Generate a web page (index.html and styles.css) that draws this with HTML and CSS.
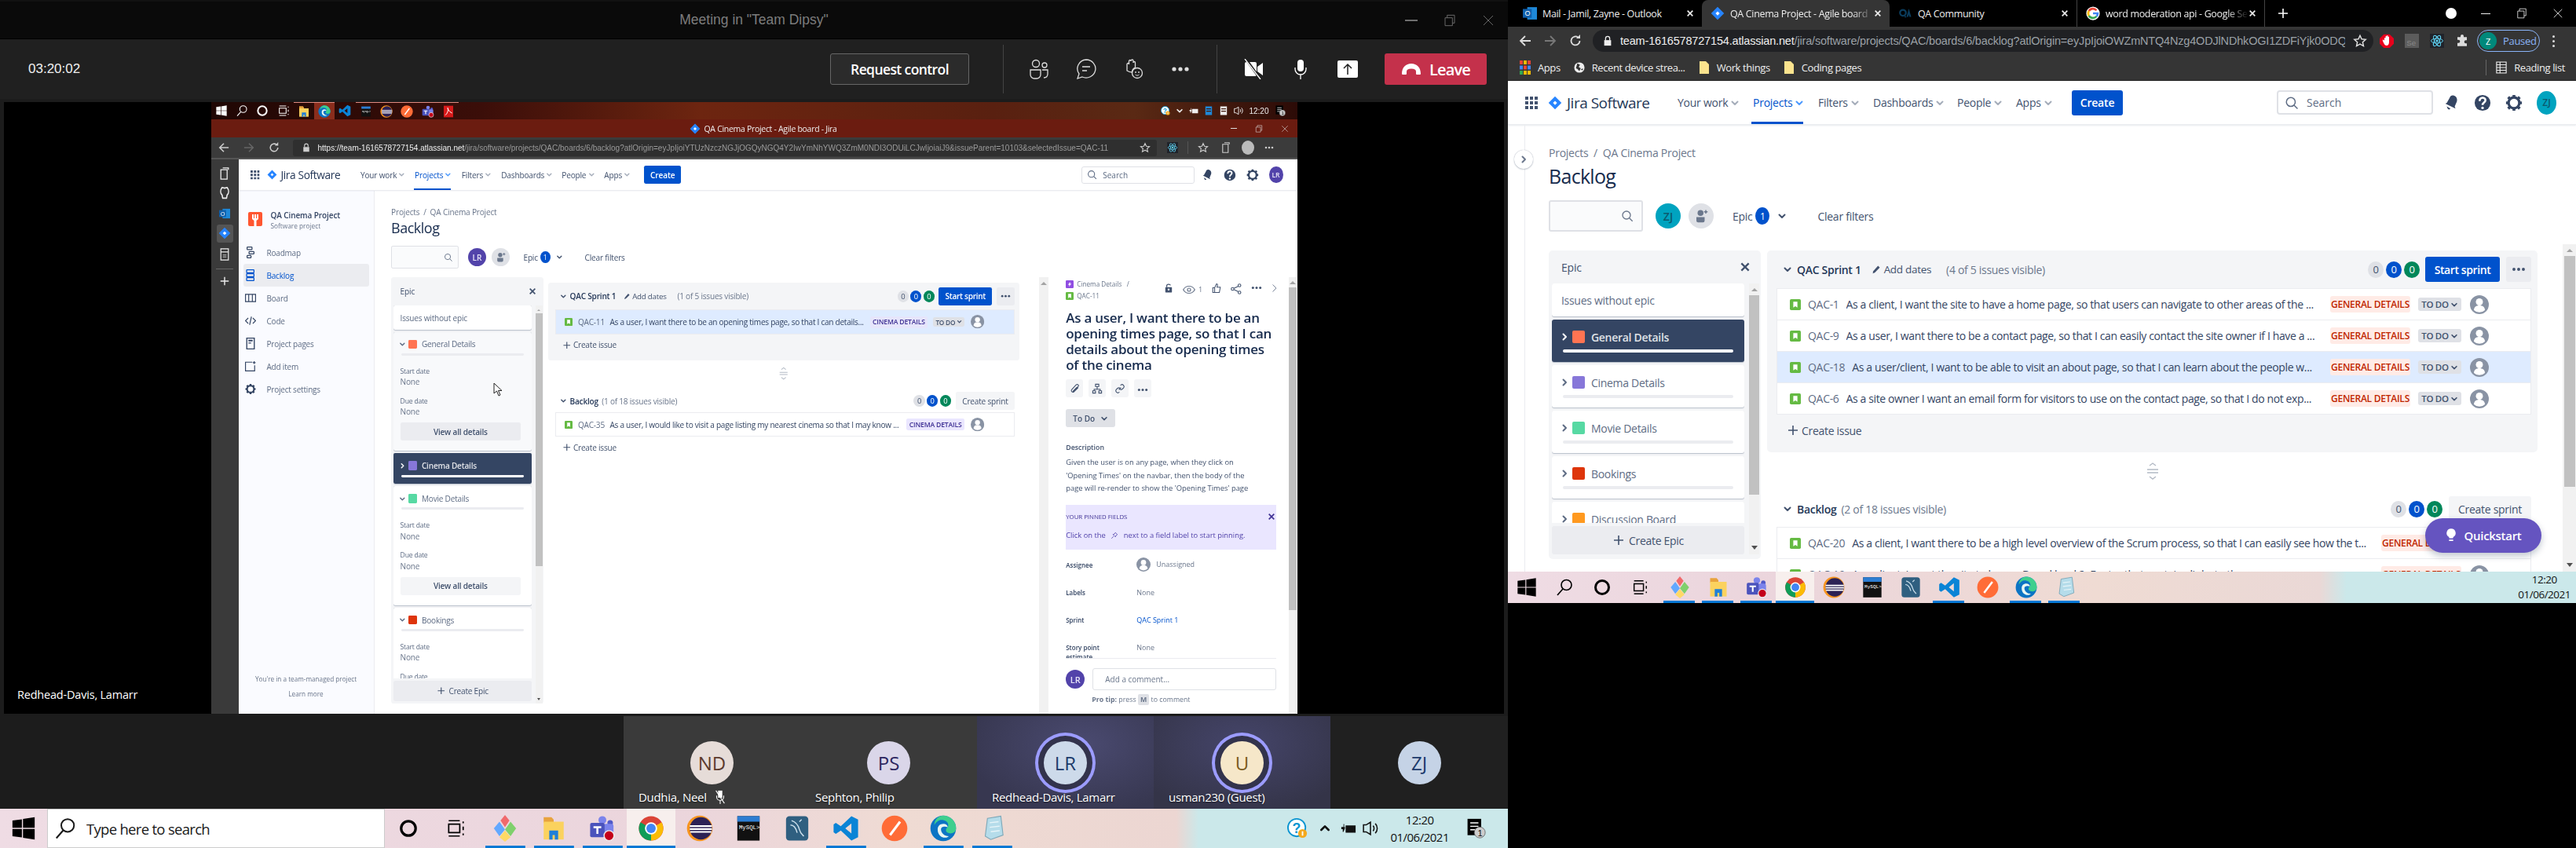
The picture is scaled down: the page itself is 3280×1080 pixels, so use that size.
FILE: index.html
```html
<!DOCTYPE html>
<html lang="en">
<head>
<meta charset="utf-8">
<title>Meeting in Team Dipsy</title>
<link rel="stylesheet" href="styles.css">
</head>
<body>
<svg class="defs" xmlns="http://www.w3.org/2000/svg">
<symbol id="win" viewBox="0 0 24 24"><path fill="currentColor" d="M2 5 10.5 3.8V11.5H2zM11.5 3.6 22 2V11.5H11.5zM2 12.5H10.5V20.2L2 19zM11.5 12.5H22V22L11.5 20.4z"/></symbol>
<symbol id="mag" viewBox="0 0 24 24"><circle cx="14.5" cy="9" r="6.5" fill="none" stroke="currentColor" stroke-width="1.6"/><path d="M10 14 3 22" fill="none" stroke="currentColor" stroke-width="1.6"/></symbol>
<symbol id="ring" viewBox="0 0 24 24"><circle cx="12" cy="12" r="8.5" fill="none" stroke="currentColor" stroke-width="3"/></symbol>
<symbol id="taskv" viewBox="0 0 24 24"><path fill="none" stroke="currentColor" stroke-width="1.6" d="M4 3H17M4 21H17M4 7h13v10H4zM21 4v2M21 10v4M21 18v2"/></symbol>
<symbol id="tree" viewBox="0 0 24 24"><polygon fill="#62a8ff" points="7,6 12,13 7,19 2,12"/><polygon fill="#7fd06c" points="17,6 22,12 17,19 12,13"/><polygon fill="#f0696c" points="12,0 16,5 12,11 8,5"/><polygon fill="#ffd966" points="12,14 17,20 12,24 7,20"/></symbol>
<symbol id="folder" viewBox="0 0 24 24"><path fill="#e8a33d" d="M3 2h7l2 2v3H3z"/><path fill="#fbd25e" d="M3 6h18v16H3z"/><path fill="#1f7fd8" d="M8 22v-8h8v8h-3v-4h-2v4z"/></symbol>
<symbol id="teams" viewBox="0 0 24 24"><circle cx="12" cy="4.5" r="3.5" fill="#7b83eb"/><circle cx="19" cy="7" r="2.5" fill="#5059c9"/><rect x="13" y="8" width="9" height="11" rx="2" fill="#7b83eb"/><rect x="1" y="7" width="13" height="13" rx="1.5" fill="#4b53bc"/><path fill="#fff" d="M4 10h7v1.8H8.4V17H6.6V11.8H4z"/><circle cx="18" cy="18.5" r="4.5" fill="#c4001a" stroke="#eee" stroke-width="1"/></symbol>
<symbol id="chrome" viewBox="0 0 24 24"><circle cx="12" cy="12" r="11" fill="#db4437"/><path fill="#fbbc05" d="M12 12 21.5 6.5A11 11 0 0 1 12 23z"/><path fill="#0f9d58" d="M12 12V23A11 11 0 0 1 2.5 6.5z"/><circle cx="12" cy="12" r="5.5" fill="#fff"/><circle cx="12" cy="12" r="4.2" fill="#4285f4"/></symbol>
<symbol id="eclipse" viewBox="0 0 24 24"><circle cx="12" cy="12" r="11.5" fill="#f7941e"/><circle cx="13" cy="12" r="10" fill="#2c2255"/><path stroke="#fff" stroke-width="1.5" d="M3 10h20M3 12.6h20M3.500 15.200h19"/></symbol>
<symbol id="mysh" viewBox="0 0 24 24"><rect x="2" y="1" width="20" height="22" fill="#111"/><rect x="2" y="1" width="20" height="5" fill="#2d7dd2"/><text x="3.500" y="13" font-size="5.200" fill="#fff" font-family="Liberation Mono">MySQL&gt;</text></symbol>
<symbol id="wb" viewBox="0 0 24 24"><rect x="2" y="1" width="20" height="22" rx="3" fill="#2f5f80"/><path fill="none" stroke="#cfe2ee" stroke-width="1" d="M7 5c3 1 6 4 7 8s3 5 4 6M6 9c3 0 5 3 6 7M14 6l2-2"/></symbol>
<symbol id="vscode" viewBox="0 0 24 24"><path fill="#0a84d6" fill-rule="evenodd" d="M17 1 7.500 10 3 7 1 8.500v7L3 17l4.500-3L17 23l6-3V4zM17 7.500v9L11.500 12z"/></symbol>
<symbol id="postman" viewBox="0 0 24 24"><circle cx="12" cy="12" r="11.500" fill="#ff6c37"/><path d="M8 18 17 6" stroke="#fff" stroke-width="2.200"/></symbol>
<symbol id="edge" viewBox="0 0 24 24"><circle cx="12" cy="12" r="11.500" fill="#0c74c4"/><path fill="#3ecf8e" d="M12 .5A11.500 11.500 0 0 1 23.500 12c0 3-2.500 4.500-5 4.500-2 0-4-1-4-2.500 0-3 2-2 2-5C16.500 6 13 4 9 4.500 7 5 5 7 4 9 4 4 8 .5 12 .5z"/><path fill="#e9f6f2" d="M7 13c0-3 2-5 5-5 2 0 4 1 4 3-2-1-6-1-6 2 0 3 3 6 7 6-3 3-10 1-10-6z"/></symbol>
<symbol id="note" viewBox="0 0 24 24"><path fill="#b5dcea" stroke="#7ea8b8" stroke-width=".8" d="M8 3 20 1l2 17-11 4-5-3z"/><path fill="none" stroke="#e7f4f8" stroke-width="1" d="M10 7l8-1M10 11l9-1M11 15l8-1"/></symbol>
<symbol id="story" viewBox="0 0 24 24"><rect width="24" height="24" rx="3" fill="#65ba43"/><path fill="#fff" d="M7.500 5.500h9v13L12 15.300 7.500 18.500z"/></symbol>
<symbol id="epicb" viewBox="0 0 24 24"><rect width="24" height="24" rx="3" fill="#904ee2"/><path fill="#fff" d="M13.500 4 7 13.500h4L10 20l7-10h-4z"/></symbol>
<symbol id="ua" viewBox="0 0 24 24"><circle cx="12" cy="12" r="12" fill="#8993a4"/><circle cx="12" cy="8.500" r="4.500" fill="#fff"/><path fill="#fff" d="M5 19c0-4 3-6 7-6s7 2 7 6a10 10 0 0 1-14 0z"/></symbol>
<symbol id="logo" viewBox="0 0 24 24"><path fill="#2684ff" d="M12 1 23 12 12 23 1 12z"/><path fill="#fff" d="M12 8.500 15.500 12 12 15.500 8.500 12z"/></symbol>
<symbol id="qalogo" viewBox="0 0 18 18"><rect width="18" height="18" rx="2" fill="#ff5630"/><path fill="#fff" d="M5 3h2v5h1V3h2v5h1V3h2v6l-2.500 2v7h-3v-7L5 9z"/></symbol>
<symbol id="grid" viewBox="0 0 16 16"><path fill="currentColor" d="M0 0h4v4H0zM6 0h4v4H6zM12 0h4v4h-4zM0 6h4v4H0zM6 6h4v4H6zM12 6h4v4h-4zM0 12h4v4H0zM6 12h4v4H6zM12 12h4v4h-4z"/></symbol>
<symbol id="chev" viewBox="0 0 12 12"><path fill="none" stroke="currentColor" stroke-width="2" stroke-linecap="round" stroke-linejoin="round" d="M2.500 4.500 6 8l3.500-3.500"/></symbol>
<symbol id="chevr" viewBox="0 0 12 12"><path fill="none" stroke="currentColor" stroke-width="2" stroke-linecap="round" stroke-linejoin="round" d="M4.500 2.500 8 6l-3.500 3.500"/></symbol>
<symbol id="srch" viewBox="0 0 24 24"><circle cx="10.500" cy="10.500" r="7.500" fill="none" stroke="currentColor" stroke-width="2"/><path d="M16 16l6 6" stroke="currentColor" stroke-width="2"/></symbol>
<symbol id="bell" viewBox="0 0 24 24"><path fill="currentColor" d="M16 2c3 1 5 4 4 8l-3 7 1 3-14-7 2-1 4-7c1-3 3-4 6-3zM6 17l5 3c-1 2-4 2-5-3z"/></symbol>
<symbol id="help" viewBox="0 0 24 24"><circle cx="12" cy="12" r="11" fill="currentColor"/><path fill="none" stroke="#fff" stroke-width="2.800" d="M8 9.500c0-6 8-6 8-1 0 3-4 3-4 6.500"/><circle cx="12" cy="19" r="1.800" fill="#fff"/></symbol>
<symbol id="gear" viewBox="0 0 24 24"><circle cx="12" cy="12" r="7.500" fill="none" stroke="currentColor" stroke-width="3.500"/><path stroke="currentColor" stroke-width="4" d="M12 1v4M12 19v4M1 12h4M19 12h4M4 4l3 3M17 17l3 3M20 4l-3 3M7 17l-3 3"/></symbol>
<symbol id="plus" viewBox="0 0 16 16"><path fill="none" stroke="currentColor" stroke-width="1.600" d="M8 2v12M2 8h12"/></symbol>
<symbol id="x" viewBox="0 0 12 12"><path fill="none" stroke="currentColor" stroke-width="2" d="M2 2l8 8M10 2l-8 8"/></symbol>
<symbol id="xthin" viewBox="0 0 24 24"><path fill="none" stroke="currentColor" stroke-width="1.400" d="M3 3l18 18M21 3 3 21"/></symbol>
<symbol id="pen" viewBox="0 0 16 16"><path fill="currentColor" d="M11 2l3 3-8.500 8.500L2 15l1-4z"/></symbol>
<symbol id="dots" viewBox="0 0 24 8"><circle cx="4" cy="4" r="2.600" fill="currentColor"/><circle cx="12" cy="4" r="2.600" fill="currentColor"/><circle cx="20" cy="4" r="2.600" fill="currentColor"/></symbol>
<symbol id="handle" viewBox="0 0 16 24"><path fill="none" stroke="#b3bac5" stroke-width="1.400" d="M4 5l4-3 4 3M1 10h14M1 14h14M4 19l4 3 4-3"/></symbol>
<symbol id="bulb" viewBox="0 0 16 20"><path fill="currentColor" d="M8 0a6.500 6.500 0 0 1 3.500 12c-.6.400-.8 1-.8 2H5.300c0-1-.2-1.600-.8-2A6.500 6.500 0 0 1 8 0zM5 16h6v2H5z"/></symbol>
<symbol id="back" viewBox="0 0 16 16"><path fill="none" stroke="currentColor" stroke-width="1.800" d="M15 8H2M8 2 2 8l6 6"/></symbol>
<symbol id="fwd" viewBox="0 0 16 16"><path fill="none" stroke="currentColor" stroke-width="1.800" d="M1 8h13M8 2l6 6-6 6"/></symbol>
<symbol id="reload" viewBox="0 0 16 16"><path fill="none" stroke="currentColor" stroke-width="1.800" d="M13.500 8A5.500 5.500 0 1 1 11.500 3.700"/><path fill="currentColor" d="M9 5h5V0z"/></symbol>
<symbol id="lock" viewBox="0 0 12 16"><path fill="currentColor" d="M1 7h10v8H1z"/><path fill="none" stroke="currentColor" stroke-width="1.500" d="M3 7V4.500a3 3 0 0 1 6 0V7"/></symbol>
<symbol id="star" viewBox="0 0 24 24"><path fill="none" stroke="currentColor" stroke-width="2" d="M12 3l2.800 6 6.700.7-5 4.500 1.400 6.600L12 17.400 6.100 20.800l1.400-6.600-5-4.500 6.700-.7z"/></symbol>
<symbol id="react" viewBox="0 0 24 24"><rect width="24" height="24" fill="#20232a"/><g fill="none" stroke="#61dafb" stroke-width="1.200"><ellipse cx="12" cy="12" rx="10" ry="4"/><ellipse cx="12" cy="12" rx="10" ry="4" transform="rotate(60 12 12)"/><ellipse cx="12" cy="12" rx="10" ry="4" transform="rotate(120 12 12)"/></g><circle cx="12" cy="12" r="2" fill="#61dafb"/></symbol>
<symbol id="puzzle" viewBox="0 0 24 24"><path fill="currentColor" d="M9 3a3 3 0 0 1 6 0v2h6v6h-2a3 3 0 0 0 0 6h2v5H3v-6h2a3 3 0 0 0 0-6H3V5h6z"/></symbol>
<symbol id="hand" viewBox="0 0 24 24"><path d="M7 1h10l7 7v9l-7 7H7l-7-7V8z" fill="#e8001c"/><path fill="#fff" d="M8 8c0-2 2-2 2 0V5c0-2 2-2 2 0v-1c0-2 2-2 2 0v2c0-2 2-2 2 0v8c0 4-2 6-4 6-3 0-4-2-6-6l-1-3c0-2 2-1 2.500 0L8 12z"/></symbol>
<symbol id="people" viewBox="0 0 26 26"><g fill="none" stroke="currentColor" stroke-width="1.300"><circle cx="9" cy="6" r="4.500"/><circle cx="20" cy="8" r="3"/><path d="M2 14h13v6a5 5 0 0 1-5 5H7a5 5 0 0 1-5-5zM17 14h7v5c0 3-2 5-5 5"/></g></symbol>
<symbol id="chat" viewBox="0 0 26 26"><path fill="none" stroke="currentColor" stroke-width="1.300" d="M13 1a12 11.500 0 1 1-5 22l-6 2 2-6A12 11.500 0 0 1 13 1z"/><path stroke="currentColor" stroke-width="1.300" d="M8 10h10M8 15h6"/></symbol>
<symbol id="raise" viewBox="0 0 26 26"><path fill="none" stroke="currentColor" stroke-width="1.300" d="M5 15V7c0-2 2.500-2 2.500 0V3c0-2 2.500-2 2.500 0v-.5c0-2 3-2 3 0V5c0-2 2.500-2 2.500 0v6c-3 1-4 3-4 6-3 0-5-1-6.500-2z"/><circle cx="18" cy="18" r="6.500" fill="none" stroke="currentColor" stroke-width="1.300"/><circle cx="16" cy="17" r=".9" fill="currentColor"/><circle cx="20" cy="17" r=".9" fill="currentColor"/><path fill="none" stroke="currentColor" d="M15.500 20c1.500 1.500 3.500 1.500 5 0"/></symbol>
<symbol id="camoff" viewBox="0 0 26 26"><path fill="#fff" d="M2 6a2 2 0 0 1 2-2h11a2 2 0 0 1 2 2v14a2 2 0 0 1-2 2H4a2 2 0 0 1-2-2zM18 10l7-5v16l-7-5z"/><path stroke="#202020" stroke-width="3" d="M4 1l18 25"/><path stroke="#fff" stroke-width="1.300" d="M2 0l20 26"/></symbol>
<symbol id="mic" viewBox="0 0 18 26"><rect x="5" y="1" width="8" height="15" rx="4" fill="#fff"/><path fill="none" stroke="#fff" stroke-width="1.300" d="M2 11v2a7 7 0 0 0 14 0v-2M9 20v6"/></symbol>
<symbol id="share" viewBox="0 0 26 22"><rect width="26" height="22" rx="2" fill="#fff"/><path fill="none" stroke="#202020" stroke-width="1.500" d="M13 18V5M8 10l5-5 5 5"/></symbol>
<symbol id="phone" viewBox="0 0 26 16"><path fill="#fff" d="M1 14C1 6 6 1 13 1s12 5 12 13a1 1 0 0 1-1 1h-4a1 1 0 0 1-1-1v-3c0-2-2-3.500-6-3.500S7 9 7 11v3a1 1 0 0 1-1 1H2a1 1 0 0 1-1-1z"/></symbol>
<symbol id="restore" viewBox="0 0 24 24"><path fill="none" stroke="currentColor" stroke-width="1.400" d="M3 7h14v15H3zM7 7V2h14v15h-4"/></symbol>
<symbol id="copy" viewBox="0 0 16 20"><path fill="none" stroke="currentColor" stroke-width="1.600" d="M2 4h10v15H2zM5 1h9v3"/></symbol>
<symbol id="github" viewBox="0 0 16 20"><path fill="none" stroke="currentColor" stroke-width="2" d="M4 1c-3 4-3 9 0 12l1 5h6l1-5c3-3 3-8 0-12l-4 1z"/></symbol>
<symbol id="outl" viewBox="0 0 16 16"><rect x="5" y="1" width="11" height="14" fill="#1e88d8"/><rect y="3" width="10" height="10" fill="#0f5fab"/><text x="2.300" y="11" font-size="8" fill="#fff" font-family="Liberation Sans">O</text></symbol>
<symbol id="disk" viewBox="0 0 16 20"><path fill="none" stroke="currentColor" stroke-width="1.500" d="M2 1h12v18H2zM2 6h12"/><path stroke="currentColor" d="M5 11h6M5 14h6"/></symbol>
<symbol id="road" viewBox="0 0 16 24"><g fill="none" stroke="currentColor" stroke-width="2"><rect x="1" y="1" width="10" height="5" rx="1"/><rect x="5" y="10" width="10" height="5" rx="1"/><rect x="1" y="18" width="8" height="5" rx="1"/></g></symbol>
<symbol id="blog" viewBox="0 0 18 24"><g fill="none" stroke="currentColor" stroke-width="2"><rect x="1" y="1" width="15" height="6" rx="1"/><rect x="1" y="9" width="15" height="6" rx="1"/><rect x="1" y="17" width="15" height="6" rx="1"/></g></symbol>
<symbol id="board" viewBox="0 0 24 18"><path fill="none" stroke="currentColor" stroke-width="2" d="M1 1h22v16H1zM8 1v16M16 1v16"/></symbol>
<symbol id="code" viewBox="0 0 24 20"><path fill="none" stroke="currentColor" stroke-width="2" d="M7 4 1 10l6 6M17 4l6 6-6 6M14 1l-4 18"/></symbol>
<symbol id="page" viewBox="0 0 16 22"><path fill="none" stroke="currentColor" stroke-width="2" d="M1 1h14v20H1z"/><path fill="currentColor" d="M4 4h8v3H4zM4 9h5v2H4z"/></symbol>
<symbol id="add" viewBox="0 0 24 22"><path fill="none" stroke="currentColor" stroke-width="2" d="M16 2H1v19h20V9"/><path stroke="currentColor" stroke-width="2" d="M20 0v6M17 3h6"/></symbol>
<symbol id="tray" viewBox="0 0 18 16"><path fill="none" stroke="currentColor" stroke-width="1.400" d="M1 4h3l5-3v14l-5-3H1zM12 5c1.500 1.500 1.500 4.500 0 6M14.500 2.500c3 3 3 8 0 11"/></symbol>
<symbol id="batt" viewBox="0 0 22 18"><path fill="currentColor" d="M7 5h14v10H7zM1 7h3V3h1v4h1v2L4 14H3V10H1z"/></symbol>
<symbol id="addp" viewBox="0 0 24 24"><circle cx="11" cy="7" r="5" fill="currentColor"/><path fill="currentColor" d="M4 14h14v6a3 3 0 0 1-3 3H7a3 3 0 0 1-3-3z"/><path stroke="currentColor" stroke-width="2" d="M20 2v6M17 5h6"/></symbol>
<symbol id="clip" viewBox="0 0 20 20"><path fill="none" stroke="currentColor" stroke-width="1.500" d="M17 8l-8 8c-2 2-6-2-4-4l8-9c3-2 6 1 4 3l-8 9c-1 1-2 0-1-1l7-7"/></symbol>
<symbol id="tree2" viewBox="0 0 20 20"><path fill="none" stroke="currentColor" stroke-width="1.600" d="M7 2h6v4H7zM2 14h5v4H2zM13 14h5v4h-5zM10 6v5M4.500 14v-3h11v3"/></symbol>
<symbol id="link" viewBox="0 0 20 20"><path fill="none" stroke="currentColor" stroke-width="1.600" d="M8 12l4-4M11 4l1-1c3-2 7 2 5 5l-3 3c-2 1-3 1-4 0M9 16l-1 1c-3 2-7-2-5-5l3-3c2-1 3-1 4 0"/></symbol>
<symbol id="unlock" viewBox="0 0 16 20"><rect x="1" y="8" width="14" height="11" rx="1" fill="currentColor"/><circle cx="8" cy="13" r="2" fill="#fff"/><path fill="none" stroke="currentColor" stroke-width="2" d="M4 8V5c0-4 7-4 8-1"/></symbol>
<symbol id="eye" viewBox="0 0 24 16"><path fill="none" stroke="currentColor" stroke-width="1.800" d="M1 8c5-9 17-9 22 0-5 9-17 9-22 0z"/><circle cx="12" cy="8" r="3" fill="none" stroke="currentColor" stroke-width="1.800"/></symbol>
<symbol id="thumb" viewBox="0 0 20 20"><path fill="none" stroke="currentColor" stroke-width="1.700" d="M2 9h4v10H2zM6 9l4-8c2 0 2.500 1.500 2 3l-1 4h7l-2 11H6z"/></symbol>
<symbol id="shr" viewBox="0 0 20 20"><g fill="none" stroke="currentColor" stroke-width="1.600"><circle cx="3.500" cy="10" r="2.500"/><circle cx="16" cy="3.500" r="2.500"/><circle cx="16" cy="16.500" r="2.500"/><path d="M6 9l8-4M6 11l8 4"/></g></symbol>
<symbol id="pin" viewBox="0 0 16 16"><path fill="none" stroke="currentColor" stroke-width="1.300" d="M2 14l4-4M5 6l5 5 1-3 3-2-4-4-2 3z"/></symbol>
<symbol id="cursor" viewBox="0 0 12 18"><path fill="#fff" stroke="#222" d="M1 1v13l3.500-3L7 17l2-1-2.500-5.500H11z"/></symbol>
<symbol id="bk" viewBox="0 0 16 20"><path fill="currentColor" d="M1 1h14v18H1zM3 5v2h10V5zM3 10v2h10v-2z"/></symbol>
<symbol id="micoff" viewBox="0 0 14 20"><path fill="#fff" d="M4 1h6v10H4z"/><path fill="none" stroke="#fff" stroke-width="1.200" d="M2 8v2a5 5 0 0 0 10 0V8M7 15v5M1 1l12 18"/></symbol>
<symbol id="help2" viewBox="0 0 28 28"><circle cx="13" cy="13" r="12" fill="#fff" stroke="#0b95d1" stroke-width="2"/><text x="7" y="20" font-size="19" font-weight="700" fill="#0b95d1" font-family="Liberation Sans">?</text><circle cx="21" cy="21" r="6" fill="#f4a81c"/><rect x="20" y="18" width="2" height="6" fill="#fff"/></symbol>
<symbol id="notif" viewBox="0 0 28 30"><rect x="2" y="1" width="20" height="24" fill="#000"/><path stroke="#fff" stroke-width="1.600" d="M6 7h12M6 12h12M6 17h9"/><circle cx="20" cy="21" r="8" fill="#ccc" stroke="#666"/><text x="17" y="26" font-size="13" fill="#111" font-family="Liberation Sans">1</text></symbol>
<symbol id="list" viewBox="0 0 16 18"><path fill="none" stroke="currentColor" stroke-width="1.300" d="M1 1h14v16H1zM1 5h14M1 9h14M1 13h14M6 1v16"/></symbol>
<symbol id="bmfolder" viewBox="0 0 14 18"><path fill="#fbe38e" d="M1 1h8l4 4v12H1z"/></symbol>
<symbol id="globe" viewBox="0 0 16 16"><circle cx="8" cy="8" r="7.500" fill="#eee"/><path fill="#333" d="M5 2l4 2-2 3 3 2-2 4-3-3-2-1zM10 11l3-2v3z"/></symbol>
<symbol id="appsg" viewBox="0 0 14 18"><g><path fill="#ea4335" d="M0 0h4v5H0z"/><path fill="#fbbc05" d="M5 0h4v5H5z"/><path fill="#ea4335" d="M10 0h4v5h-4z"/><path fill="#4285f4" d="M0 6.500h4v5H0z"/><path fill="#ea4335" d="M5 6.500h4v5H5z"/><path fill="#4285f4" d="M10 6.500h4v5h-4z"/><path fill="#34a853" d="M0 13h4v5H0z"/><path fill="#fbbc05" d="M5 13h4v5H5z"/><path fill="#fbbc05" d="M10 13h4v5h-4z"/></g></symbol>
<symbol id="gg" viewBox="0 0 24 24"><circle cx="12" cy="12" r="11.500" fill="#fff"/><path fill="none" stroke="#ea4335" stroke-width="3.500" d="M18 7A8 8 0 0 0 5 8"/><path fill="none" stroke="#fbbc05" stroke-width="3.500" d="M5 8a8 8 0 0 0 0 8"/><path fill="none" stroke="#34a853" stroke-width="3.500" d="M5 16a8 8 0 0 0 13 1"/><path fill="none" stroke="#4285f4" stroke-width="3.500" d="M12 12h8c0 2-1 4-2 5"/></symbol>
<symbol id="qa" viewBox="0 0 24 24"><circle cx="8" cy="11" r="5" fill="none" stroke="#0b3c5c" stroke-width="3"/><path fill="#0b3c5c" d="M11 14l3 5h-3zM14 18l4-14 4 14h-3l-1-4-1 4z"/></symbol>
<symbol id="sel" viewBox="0 0 24 24"><rect width="24" height="24" fill="#5c5c5c"/><text x="3" y="20" font-size="13" fill="#8a8a8a" font-family="Liberation Sans">Se</text></symbol>
<symbol id="pdf" viewBox="0 0 24 24"><rect x="3" y="1" width="18" height="22" fill="#d71a1a"/><path fill="none" stroke="#fff" stroke-width="1.500" d="M6 19c4-3 6-9 5-13s-1 5 8 9"/></symbol>
</svg>

<main class="desktop">
<section class="teams">
  <header class="t-title">
    <span></span>
    <span class="t-name">Meeting in "Team Dipsy"</span>
    <div class="winctl">
      <span class="wc-min"></span>
      <svg class="wc-ic"><use href="#restore"/></svg>
      <svg class="wc-ic"><use href="#xthin"/></svg>
    </div>
  </header>
  <div class="t-bar">
    <span class="timer">03:20:02</span>
    <button class="reqctl">Request control</button>
    <span class="t-sep"></span>
    <span class="t-cell"><svg class="ti26"><use href="#people"/></svg></span>
    <span class="t-cell"><svg class="ti26"><use href="#chat"/></svg></span>
    <span class="t-cell"><svg class="ti26"><use href="#raise"/></svg></span>
    <span class="t-cell"><svg class="ti-dots"><use href="#dots"/></svg></span>
    <span class="t-sep t-sep2"></span>
    <span class="t-cell"><svg class="ti26"><use href="#camoff"/></svg></span>
    <span class="t-cell"><svg class="ti26"><use href="#mic"/></svg></span>
    <span class="t-cell"><svg class="ti-share"><use href="#share"/></svg></span>
    <button class="leave"><svg class="ti-phone"><use href="#phone"/></svg>Leave</button>
  </div>
  <div class="stage">
    <div class="share">
      <div class="s-task">
        <span class="st-i st-w"><svg class="i16"><use href="#win"/></svg></span>
        <span class="st-i st-w"><svg class="i16"><use href="#mag"/></svg></span>
        <span class="st-i st-w"><svg class="i16"><use href="#ring"/></svg></span>
        <span class="st-i st-w"><svg class="i16"><use href="#taskv"/></svg></span>
        <span class="st-i st-u"><svg class="i16"><use href="#folder"/></svg></span>
        <span class="st-i st-on"><svg class="i16"><use href="#edge"/></svg></span>
        <span class="st-i"><svg class="i16"><use href="#vscode"/></svg></span>
        <span class="st-i st-u"><svg class="i14"><use href="#mysh"/></svg></span>
        <span class="st-i st-u"><svg class="i16"><use href="#eclipse"/></svg></span>
        <span class="st-i st-u"><svg class="i16"><use href="#postman"/></svg></span>
        <span class="st-i st-u"><svg class="i16"><use href="#teams"/></svg></span>
        <span class="st-i st-u"><svg class="i16"><use href="#pdf"/></svg></span>
        <div class="st-tray">
          <svg class="i12"><use href="#help2"/></svg>
          <svg class="i10"><use href="#chev"/></svg>
          <svg class="i12"><use href="#batt"/></svg>
          <svg class="i12 tr-cloud"><use href="#bk"/></svg>
          <svg class="i12"><use href="#bk"/></svg>
          <svg class="i12"><use href="#tray"/></svg>
          <span class="st-time">12:20</span>
          <svg class="i14"><use href="#notif"/></svg>
        </div>
      </div>
      <div class="s-titlebar">
        <svg class="i14"><use href="#logo"/></svg>
        <span>QA Cinema Project - Agile board - Jira</span>
        <div class="s-wc">
          <span class="s-min"></span>
          <svg class="i10"><use href="#restore"/></svg>
          <svg class="i10"><use href="#xthin"/></svg>
        </div>
      </div>
      <div class="s-addr">
        <span class="sa-c"><svg class="i14"><use href="#back"/></svg></span>
        <span class="sa-c sa-dim"><svg class="i14"><use href="#fwd"/></svg></span>
        <span class="sa-c"><svg class="i14"><use href="#reload"/></svg></span>
        <div class="sa-omni">
          <svg class="i12"><use href="#lock"/></svg>
          <span class="sa-url"><b>https://team-1616578727154.atlassian.net</b>/jira/software/projects/QAC/boards/6/backlog?atlOrigin=eyJpIjoiYTUzNzczNGJjOGQyNGQ4Y2IwYmNhYWQ3ZmM0NDI3ODUiLCJwIjoiaiJ9&amp;issueParent=10103&amp;selectedIssue=QAC-11</span>
          <svg class="i14"><use href="#star"/></svg>
        </div>
        <svg class="i14 sa-re"><use href="#react"/></svg>
        <span class="sa-sep"></span>
        <svg class="i14"><use href="#star"/></svg>
        <svg class="i14 sa-col"><use href="#copy"/></svg>
        <span class="sa-av"></span>
        <svg class="i12"><use href="#dots"/></svg>
      </div>
      <div class="s-body">
        <div class="s-tabs">
          <span class="stb"><svg class="i16"><use href="#copy"/></svg></span>
          <span class="stb"><svg class="i16"><use href="#github"/></svg></span>
          <span class="stb"><svg class="i14"><use href="#outl"/></svg></span>
          <span class="stb stb-on"><svg class="i16"><use href="#logo"/></svg></span>
          <span class="stb"><svg class="i16"><use href="#disk"/></svg></span>
          <span class="stb stb-add"><svg class="i14"><use href="#plus"/></svg></span>
        </div>
        <div class="s-jira">
          <div class="jhead s-zoom">
            <svg class="j-grid"><use href="#grid"/></svg>
            <svg class="j-logo"><use href="#logo"/></svg>
            <span class="j-brand">Jira Software</span>
            <nav class="j-nav">
              <span class="ni">Your work<svg class="chv"><use href="#chev"/></svg></span>
              <span class="ni ni-on">Projects<svg class="chv"><use href="#chev"/></svg></span>
              <span class="ni">Filters<svg class="chv"><use href="#chev"/></svg></span>
              <span class="ni">Dashboards<svg class="chv"><use href="#chev"/></svg></span>
              <span class="ni">People<svg class="chv"><use href="#chev"/></svg></span>
              <span class="ni">Apps<svg class="chv"><use href="#chev"/></svg></span>
            </nav>
            <button class="j-create">Create</button>
            <div class="j-search"><svg class="i18"><use href="#srch"/></svg><span>Search</span></div>
            <svg class="j-hic"><use href="#bell"/></svg>
            <svg class="j-hic"><use href="#help"/></svg>
            <svg class="j-hic"><use href="#gear"/></svg>
            <span class="av av-lr av-head">LR</span>
          </div>
          <div class="s-main">
            <aside class="side">
              <div class="side-head">
                <svg class="side-logo"><use href="#qalogo"/></svg>
                <div><p class="sh-t">QA Cinema Project</p><p class="sh-s">Software project</p></div>
              </div>
              <ul class="side-nav">
                <li><svg class="sn-i"><use href="#road"/></svg>Roadmap</li>
                <li class="sn-on"><svg class="sn-i"><use href="#blog"/></svg>Backlog</li>
                <li><svg class="sn-i"><use href="#board"/></svg>Board</li>
                <li><svg class="sn-i"><use href="#code"/></svg>Code</li>
                <li><svg class="sn-i"><use href="#page"/></svg>Project pages</li>
                <li><svg class="sn-i"><use href="#add"/></svg>Add item</li>
                <li><svg class="sn-i"><use href="#gear"/></svg>Project settings</li>
              </ul>
              <div class="side-foot"><p>You're in a team-managed project</p><p>Learn more</p></div>
            </aside>
            <div class="jcol s-zoom s-col">
              <p class="crumb">Projects &nbsp;/&nbsp; QA Cinema Project</p>
              <h1 class="j-h1">Backlog</h1>
              <div class="filters">
                <div class="f-search"><svg class="i16"><use href="#srch"/></svg></div>
                <span class="av av-lr av-32">LR</span>
                <span class="av av-add av-32"><svg class="i18"><use href="#addp"/></svg></span>
                <span class="f-epic">Epic<b class="f-badge">1</b><svg class="chv2"><use href="#chev"/></svg></span>
                <span class="f-clear">Clear filters</span>
              </div>
              <div class="board">
                <div class="epic s-epic">
                  <div class="ep-head"><span>Epic</span><svg class="i14"><use href="#x"/></svg></div>
                  <div class="ep-body">
                    <div class="ep-col">
                      <div class="ep-list">
                        <div class="ep-card ep-none">Issues without epic</div>
                        <div class="ep-card ep-soft">
                          <div class="ep-t"><svg class="i12"><use href="#chev"/></svg><i class="sq sq-g"></i>General Details</div>
                          <div class="ep-bar"></div>
                          <p class="ep-l">Start date</p><p class="ep-v">None</p>
                          <p class="ep-l">Due date</p><p class="ep-v">None</p>
                          <div class="ep-view">View all details</div>
                        </div>
                        <div class="ep-card ep-on">
                          <div class="ep-t"><svg class="i12"><use href="#chevr"/></svg><i class="sq sq-c"></i>Cinema Details</div>
                          <div class="ep-bar"></div>
                        </div>
                        <div class="ep-card">
                          <div class="ep-t"><svg class="i12"><use href="#chev"/></svg><i class="sq sq-m"></i>Movie Details</div>
                          <div class="ep-bar"></div>
                          <p class="ep-l">Start date</p><p class="ep-v">None</p>
                          <p class="ep-l">Due date</p><p class="ep-v">None</p>
                          <div class="ep-view">View all details</div>
                        </div>
                        <div class="ep-card">
                          <div class="ep-t"><svg class="i12"><use href="#chev"/></svg><i class="sq sq-b"></i>Bookings</div>
                          <div class="ep-bar"></div>
                          <p class="ep-l">Start date</p><p class="ep-v">None</p>
                          <p class="ep-l">Due date</p><p class="ep-v">None</p>
                        </div>
                      </div>
                      <div class="ep-create"><svg class="i16"><use href="#plus"/></svg>Create Epic</div>
                    </div>
                    <div class="vs vs-s"><i class="vs-up"></i><i class="vs-th"></i><i class="vs-dn"></i></div>
                  </div>
                </div>
                <div class="bl s-bl">
                  <div class="sp">
                    <div class="sp-head">
                      <svg class="i12"><use href="#chev"/></svg><b>QAC Sprint 1</b>
                      <span class="sp-dates"><svg class="i12"><use href="#pen"/></svg>Add dates</span>
                      <span class="sp-count">(1 of 5 issues visible)</span>
                      <span class="cnts"><i class="c0">0</i><i class="c1">0</i><i class="c2">0</i></span>
                      <button class="b-start">Start sprint</button>
                      <button class="b-more"><svg class="i-dots"><use href="#dots"/></svg></button>
                    </div>
                    <div class="rows">
                      <div class="row row-sel"><svg class="r-ic"><use href="#story"/></svg><span class="r-key">QAC-11</span><span class="r-sum">As a user, I want there to be an opening times page, so that I can details...</span><span class="tag tag-c">CINEMA DETAILS</span><span class="todo">TO DO<svg class="i10"><use href="#chev"/></svg></span><svg class="r-av"><use href="#ua"/></svg></div>
                    </div>
                    <div class="mk"><svg class="i16"><use href="#plus"/></svg>Create issue</div>
                  </div>
                  <div class="drag"><svg class="drag-i"><use href="#handle"/></svg></div>
                  <div class="bk">
                    <div class="sp-head">
                      <svg class="i12"><use href="#chev"/></svg><b>Backlog</b>
                      <span class="sp-count">(1 of 18 issues visible)</span>
                      <span class="cnts"><i class="c0">0</i><i class="c1">0</i><i class="c2">0</i></span>
                      <button class="b-create">Create sprint</button>
                    </div>
                    <div class="rows">
                      <div class="row"><svg class="r-ic"><use href="#story"/></svg><span class="r-key">QAC-35</span><span class="r-sum">As a user, I would like to visit a page listing my nearest cinema so that I may know ...</span><span class="tag tag-c">CINEMA DETAILS</span><svg class="r-av"><use href="#ua"/></svg></div>
                    </div>
                    <div class="mk"><svg class="i16"><use href="#plus"/></svg>Create issue</div>
                  </div>
                </div>
              </div>
            </div>
            <div class="dwrap">
              <div class="vs vs-d"><i class="vs-up"></i><i class="vs-fill"></i><i class="vs-dn"></i></div>
              <div class="detail">
                <div class="d-scroll">
                  <div class="d-top">
                    <div class="d-crumb">
                      <p><svg class="i10"><use href="#epicb"/></svg>Cinema Details &nbsp;&nbsp;/</p>
                      <p><svg class="i10"><use href="#story"/></svg>QAC-11</p>
                    </div>
                    <div class="d-act">
                      <svg class="i12"><use href="#unlock"/></svg>
                      <span class="d-eye"><svg class="i16"><use href="#eye"/></svg>1</span>
                      <svg class="i12"><use href="#thumb"/></svg>
                      <svg class="i14"><use href="#shr"/></svg>
                      <svg class="i-d14"><use href="#dots"/></svg>
                      <svg class="i12"><use href="#xthin"/></svg>
                    </div>
                  </div>
                  <h2 class="d-title">As a user, I want there to be an opening times page, so that I can details about the opening times of the cinema</h2>
                  <div class="d-btns">
                    <span class="d-b"><svg class="i14"><use href="#clip"/></svg></span>
                    <span class="d-b"><svg class="i14"><use href="#tree2"/></svg></span>
                    <span class="d-b"><svg class="i14"><use href="#link"/></svg></span>
                    <span class="d-b"><svg class="i-d14"><use href="#dots"/></svg></span>
                  </div>
                  <div class="d-status">To Do<svg class="i10"><use href="#chev"/></svg></div>
                  <p class="d-lab">Description</p>
                  <p class="d-desc">Given the user is on any page, when they click on 'Opening Times' on the navbar, then the body of the page will re-render to show the 'Opening Times' page</p>
                  <div class="pinned">
                    <div class="pin-t"><span>YOUR PINNED FIELDS</span><svg class="i10"><use href="#x"/></svg></div>
                    <p class="pin-b">Click on the <svg class="i10"><use href="#pin"/></svg> next to a field label to start pinning.</p>
                  </div>
                  <div class="f-row"><span class="f-l">Assignee</span><span class="f-v f-ua"><svg class="i18"><use href="#ua"/></svg>Unassigned</span></div>
                  <div class="f-row"><span class="f-l">Labels</span><span class="f-v">None</span></div>
                  <div class="f-row"><span class="f-l">Sprint</span><span class="f-v f-link">QAC Sprint 1</span></div>
                  <div class="f-row"><span class="f-l">Story point estimate</span><span class="f-v">None</span></div>
                </div>
                <div class="d-foot">
                  <div class="d-cm"><span class="av av-lr av-24">LR</span><div class="d-input">Add a comment...</div></div>
                  <p class="d-tip"><b>Pro tip:</b> press <kbd>M</kbd> to comment</p>
                </div>
              </div>
              <div class="vs vs-r"><i class="vs-up"></i><i class="vs-th"></i><i class="vs-dn"></i></div>
            </div>
          </div>
        </div>
      </div>
    </div>
    <span class="stage-name">Redhead-Davis, Lamarr</span>
    <svg class="cursor"><use href="#cursor"/></svg>
  </div>
  <div class="strip">
    <div class="tile tile-a"><span class="pa pa-nd">ND</span><p class="nm">Dudhia, Neel <svg class="i18"><use href="#micoff"/></svg></p></div>
    <div class="tile tile-a"><span class="pa pa-ps">PS</span><p class="nm">Sephton, Philip</p></div>
    <div class="tile tile-p tile-pl"><span class="pa pa-lr pa-ring">LR</span><p class="nm">Redhead-Davis, Lamarr</p></div>
    <div class="tile tile-p tile-pr"><span class="pa pa-u pa-ring">U</span><p class="nm">usman230 (Guest)</p></div>
    <div class="tile tile-z"><span class="pa pa-zj">ZJ</span></div>
  </div>
  <div class="tb tb-l">
    <span class="tb-sys tb-sys-l"><svg class="i34"><use href="#win"/></svg></span>
    <div class="tb-search"><svg class="i30"><use href="#mag"/></svg><span>Type here to search</span></div>
    <span class="tb-sys tb-sys-l"><svg class="i26"><use href="#ring"/></svg></span>
    <span class="tb-sys tb-sys-l"><svg class="i26"><use href="#taskv"/></svg></span>
    <span class="tb-a on"><svg class="i34"><use href="#tree"/></svg></span>
    <span class="tb-a on"><svg class="i34"><use href="#folder"/></svg></span>
    <span class="tb-a on"><svg class="i34"><use href="#teams"/></svg></span>
    <span class="tb-a on tb-act"><svg class="i34"><use href="#chrome"/></svg></span>
    <span class="tb-a"><svg class="i34"><use href="#eclipse"/></svg></span>
    <span class="tb-a"><svg class="i34"><use href="#mysh"/></svg></span>
    <span class="tb-a"><svg class="i34"><use href="#wb"/></svg></span>
    <span class="tb-a on"><svg class="i34"><use href="#vscode"/></svg></span>
    <span class="tb-a"><svg class="i34"><use href="#postman"/></svg></span>
    <span class="tb-a on"><svg class="i34"><use href="#edge"/></svg></span>
    <span class="tb-a on"><svg class="i34"><use href="#note"/></svg></span>
    <div class="tb-tray">
      <svg class="i26"><use href="#help2"/></svg>
      <svg class="i16 up"><use href="#chev"/></svg>
      <svg class="i20"><use href="#batt"/></svg>
      <svg class="i20"><use href="#tray"/></svg>
      <span class="clock"><span>12:20</span><span>01/06/2021</span></span>
      <svg class="i26"><use href="#notif"/></svg>
    </div>
  </div>
</section>

<section class="chrome">
  <div class="c-tabs">
    <div class="tab"><svg class="i18"><use href="#outl"/></svg><span class="tab-t">Mail - Jamil, Zayne - Outlook</span><svg class="i10"><use href="#x"/></svg></div>
    <div class="tab tab-on"><svg class="i18"><use href="#logo"/></svg><span class="tab-t">QA Cinema Project - Agile board</span><svg class="i10"><use href="#x"/></svg></div>
    <div class="tab tab-sep"><svg class="i18"><use href="#qa"/></svg><span class="tab-t">QA Community</span><svg class="i10"><use href="#x"/></svg></div>
    <div class="tab tab-sep"><svg class="i18"><use href="#gg"/></svg><span class="tab-t">word moderation api - Google Se</span><svg class="i10"><use href="#x"/></svg></div>
    <svg class="c-plus"><use href="#plus"/></svg>
    <div class="c-wc">
      <span class="c-circ"></span>
      <span class="c-min"></span>
      <svg class="i14"><use href="#restore"/></svg>
      <svg class="i14 c-x"><use href="#xthin"/></svg>
    </div>
  </div>
  <div class="c-tool">
    <span class="ct-c"><svg class="i16"><use href="#back"/></svg></span>
    <span class="ct-c ct-dim"><svg class="i16"><use href="#fwd"/></svg></span>
    <span class="ct-c"><svg class="i16"><use href="#reload"/></svg></span>
    <div class="omni">
      <svg class="i-lock"><use href="#lock"/></svg>
      <span class="url"><b>team-1616578727154.atlassian.net</b>/jira/software/projects/QAC/boards/6/backlog?atlOrigin=eyJpIjoiOWZmNTQ4Nzg4ODJlNDhkOGI1ZDFiYjk0ODQ...</span>
      <svg class="i18"><use href="#star"/></svg>
    </div>
    <span class="ct-c"><svg class="i18"><use href="#hand"/></svg></span>
    <span class="ct-c"><svg class="i18"><use href="#sel"/></svg></span>
    <span class="ct-c"><svg class="i18"><use href="#react"/></svg></span>
    <span class="ct-c"><svg class="i16"><use href="#puzzle"/></svg></span>
    <div class="paused"><span class="p-z">Z</span><span>Paused</span></div>
    <span class="ct-dots"><i></i><i></i><i></i></span>
  </div>
  <div class="c-marks">
    <span class="bm"><svg class="i-apps"><use href="#appsg"/></svg>Apps</span>
    <span class="bm"><svg class="i14"><use href="#globe"/></svg>Recent device strea...</span>
    <span class="bm"><svg class="i-bf"><use href="#bmfolder"/></svg>Work things</span>
    <span class="bm"><svg class="i-bf"><use href="#bmfolder"/></svg>Coding pages</span>
    <span class="bm bm-r"><svg class="i-apps"><use href="#list"/></svg>Reading list</span>
  </div>
  <div class="jira">
    <div class="jhead">
      <svg class="j-grid"><use href="#grid"/></svg>
      <svg class="j-logo"><use href="#logo"/></svg>
      <span class="j-brand">Jira Software</span>
      <nav class="j-nav">
        <span class="ni">Your work<svg class="chv"><use href="#chev"/></svg></span>
        <span class="ni ni-on">Projects<svg class="chv"><use href="#chev"/></svg></span>
        <span class="ni">Filters<svg class="chv"><use href="#chev"/></svg></span>
        <span class="ni">Dashboards<svg class="chv"><use href="#chev"/></svg></span>
        <span class="ni">People<svg class="chv"><use href="#chev"/></svg></span>
        <span class="ni">Apps<svg class="chv"><use href="#chev"/></svg></span>
      </nav>
      <button class="j-create">Create</button>
      <div class="j-search"><svg class="i18"><use href="#srch"/></svg><span>Search</span></div>
      <svg class="j-hic"><use href="#bell"/></svg>
      <svg class="j-hic"><use href="#help"/></svg>
      <svg class="j-hic"><use href="#gear"/></svg>
      <span class="av av-zj av-head">ZJ</span>
    </div>
    <div class="j-main">
      <div class="rail"><span class="rail-btn"><svg class="i12"><use href="#chevr"/></svg></span></div>
      <div class="jcol">
        <p class="crumb">Projects &nbsp;/&nbsp; QA Cinema Project</p>
        <h1 class="j-h1">Backlog</h1>
        <div class="filters">
          <div class="f-search"><svg class="i16"><use href="#srch"/></svg></div>
          <span class="av av-zj av-32">ZJ</span>
          <span class="av av-add av-32"><svg class="i18"><use href="#addp"/></svg></span>
          <span class="f-epic">Epic<b class="f-badge">1</b><svg class="chv2"><use href="#chev"/></svg></span>
          <span class="f-clear">Clear filters</span>
        </div>
        <div class="board">
          <div class="epic">
            <div class="ep-head"><span>Epic</span><svg class="i14"><use href="#x"/></svg></div>
            <div class="ep-body">
              <div class="ep-col">
                <div class="ep-list">
                  <div class="ep-card ep-none">Issues without epic</div>
                  <div class="ep-card ep-on"><div class="ep-t"><svg class="i12"><use href="#chevr"/></svg><i class="sq sq-g"></i>General Details</div><div class="ep-bar"></div></div>
                  <div class="ep-card"><div class="ep-t"><svg class="i12"><use href="#chevr"/></svg><i class="sq sq-c"></i>Cinema Details</div><div class="ep-bar"></div></div>
                  <div class="ep-card"><div class="ep-t"><svg class="i12"><use href="#chevr"/></svg><i class="sq sq-m"></i>Movie Details</div><div class="ep-bar"></div></div>
                  <div class="ep-card"><div class="ep-t"><svg class="i12"><use href="#chevr"/></svg><i class="sq sq-b"></i>Bookings</div><div class="ep-bar"></div></div>
                  <div class="ep-card"><div class="ep-t"><svg class="i12"><use href="#chevr"/></svg><i class="sq sq-d"></i>Discussion Board</div><div class="ep-bar"></div></div>
                </div>
                <div class="ep-create"><svg class="i16"><use href="#plus"/></svg>Create Epic</div>
              </div>
              <div class="vs vs-e"><i class="vs-up"></i><i class="vs-th"></i><i class="vs-dn"></i></div>
            </div>
          </div>
          <div class="bl">
            <div class="sp">
              <div class="sp-head">
                <svg class="i12"><use href="#chev"/></svg><b>QAC Sprint 1</b>
                <span class="sp-dates"><svg class="i12"><use href="#pen"/></svg>Add dates</span>
                <span class="sp-count">(4 of 5 issues visible)</span>
                <span class="cnts"><i class="c0">0</i><i class="c1">0</i><i class="c2">0</i></span>
                <button class="b-start">Start sprint</button>
                <button class="b-more"><svg class="i-dots"><use href="#dots"/></svg></button>
              </div>
              <div class="rows">
                <div class="row"><svg class="r-ic"><use href="#story"/></svg><span class="r-key">QAC-1</span><span class="r-sum">As a client, I want the site to have a home page, so that users can navigate to other areas of the ...</span><span class="tag">GENERAL DETAILS</span><span class="todo">TO DO<svg class="i10"><use href="#chev"/></svg></span><svg class="r-av"><use href="#ua"/></svg></div>
                <div class="row"><svg class="r-ic"><use href="#story"/></svg><span class="r-key">QAC-9</span><span class="r-sum">As a user, I want there to be a contact page, so that I can easily contact the site owner if I have a ...</span><span class="tag">GENERAL DETAILS</span><span class="todo">TO DO<svg class="i10"><use href="#chev"/></svg></span><svg class="r-av"><use href="#ua"/></svg></div>
                <div class="row row-sel"><svg class="r-ic"><use href="#story"/></svg><span class="r-key">QAC-18</span><span class="r-sum">As a user/client, I want to be able to visit an about page, so that I can learn about the people w...</span><span class="tag">GENERAL DETAILS</span><span class="todo">TO DO<svg class="i10"><use href="#chev"/></svg></span><svg class="r-av"><use href="#ua"/></svg></div>
                <div class="row"><svg class="r-ic"><use href="#story"/></svg><span class="r-key">QAC-6</span><span class="r-sum">As a site owner I want an email form for visitors to use on the contact page, so that I do not exp...</span><span class="tag">GENERAL DETAILS</span><span class="todo">TO DO<svg class="i10"><use href="#chev"/></svg></span><svg class="r-av"><use href="#ua"/></svg></div>
              </div>
              <div class="mk"><svg class="i16"><use href="#plus"/></svg>Create issue</div>
            </div>
            <div class="drag"><svg class="drag-i"><use href="#handle"/></svg></div>
            <div class="bk">
              <div class="sp-head">
                <svg class="i12"><use href="#chev"/></svg><b>Backlog</b>
                <span class="sp-count">(2 of 18 issues visible)</span>
                <span class="cnts"><i class="c0">0</i><i class="c1">0</i><i class="c2">0</i></span>
                <button class="b-create">Create sprint</button>
              </div>
              <div class="rows">
                <div class="row"><svg class="r-ic"><use href="#story"/></svg><span class="r-key">QAC-20</span><span class="r-sum">As a client, I want there to be a high level overview of the Scrum process, so that I can easily see how the t...</span><span class="tag">GENERAL DETAILS</span><svg class="r-av"><use href="#ua"/></svg></div>
                <div class="row"><svg class="r-ic"><use href="#story"/></svg><span class="r-key">QAC-19</span><span class="r-sum">As a client, I want the site to have a Board level 2: Footer that contains links to the ...</span><span class="tag">GENERAL DETAILS</span><svg class="r-av"><use href="#ua"/></svg></div>
              </div>
            </div>
          </div>
          <div class="vs vs-page"><i class="vs-up"></i><i class="vs-th"></i><i class="vs-dn"></i></div>
        </div>
      </div>
      <button class="quick"><svg class="i-bulb"><use href="#bulb"/></svg>Quickstart</button>
    </div>
  </div>
  <div class="tb tb-r">
    <span class="tb-sys"><svg class="i28"><use href="#win"/></svg></span>
    <span class="tb-sys"><svg class="i24"><use href="#mag"/></svg></span>
    <span class="tb-sys"><svg class="i24"><use href="#ring"/></svg></span>
    <span class="tb-sys tb-last"><svg class="i22"><use href="#taskv"/></svg></span>
    <span class="tb-a on"><svg class="i28"><use href="#tree"/></svg></span>
    <span class="tb-a on"><svg class="i28"><use href="#folder"/></svg></span>
    <span class="tb-a on"><svg class="i28"><use href="#teams"/></svg></span>
    <span class="tb-a on tb-act"><svg class="i28"><use href="#chrome"/></svg></span>
    <span class="tb-a"><svg class="i28"><use href="#eclipse"/></svg></span>
    <span class="tb-a"><svg class="i28"><use href="#mysh"/></svg></span>
    <span class="tb-a"><svg class="i28"><use href="#wb"/></svg></span>
    <span class="tb-a on"><svg class="i28"><use href="#vscode"/></svg></span>
    <span class="tb-a"><svg class="i28"><use href="#postman"/></svg></span>
    <span class="tb-a on"><svg class="i28"><use href="#edge"/></svg></span>
    <span class="tb-a on"><svg class="i28"><use href="#note"/></svg></span>
    <span class="clock clock-r"><span>12:20</span><span>01/06/2021</span></span>
  </div>
</section>
</main>
</body>
</html>
```
FILE: styles.css
```css
*{box-sizing:border-box}
html,body{margin:0;padding:0;background:#000}
body{width:3280px;height:1080px;overflow:hidden;font-family:"Open Sans","Noto Sans",sans-serif;color:#172b4d}
p,h1,h2,ul{margin:0;padding:0}
li{list-style:none}
i{font-style:normal}
button{font-family:inherit;border:0;padding:0}
.defs{display:none}
svg{flex:none;display:block;overflow:visible}
.desktop{display:flex;width:3280px;height:1080px}
.i10{width:10px;height:10px}.i12{width:12px;height:12px}.i14{width:14px;height:14px}.i16{width:16px;height:16px}
.i18{width:18px;height:18px}.i20{width:20px;height:20px}.i22{width:22px;height:22px}.i24{width:24px;height:24px}
.i26{width:26px;height:26px}.i28{width:28px;height:28px}.i30{width:30px;height:30px}.i34{width:34px;height:34px}

/* teams */
.teams{width:1920px;height:1080px;display:flex;flex-direction:column;background:#1c1c1c;flex:none}
.t-title{height:50px;background:#0a0a0a;border-top:2px solid #111;display:grid;grid-template-columns:1fr auto 1fr;align-items:center;border-bottom:1px solid #000}
.t-name{font:17.5px "Liberation Sans",sans-serif;color:#7c7c7c}
.winctl{display:flex;align-items:center;justify-content:flex-end;gap:33px;padding-right:17px;color:#6f6f6f}
.wc-min{width:16px;height:2px;background:#6f6f6f}
.wc-ic{width:16px;height:18px}
.t-bar{height:76px;background:#202020;display:flex;align-items:center;padding:0 27px 0 36px;color:#ddd;flex:none}
.timer{font:17px "Liberation Sans",sans-serif;color:#eee;margin-right:auto}
.reqctl{width:177px;height:40px;background:#2b2b2b;border:1px solid #666;border-radius:3px;color:#fff;font:600 17.5px "Open Sans",sans-serif;letter-spacing:-.6px;margin-right:43px}
.t-sep{width:1px;height:62px;background:#444;margin-right:15px}
.t-sep2{margin:0 16px 0 16px}
.t-cell{width:60px;display:flex;justify-content:center;align-items:center}
.ti26{width:26px;height:26px}
.ti-dots{width:24px;height:8px}
.ti-share{width:26px;height:22px}
.ti-phone{width:26px;height:16px}
.leave{width:130px;height:40px;margin-left:17px;background:#c4314b;border-radius:3px;color:#fff;font:600 20px "Open Sans",sans-serif;letter-spacing:-.8px;display:flex;align-items:center;justify-content:center;gap:10px}
.stage{height:779px;margin:4px 5px 0;background:#000;display:flex;justify-content:center;position:relative;flex:none}
.stage-name{position:absolute;left:17px;bottom:15px;font:14.5px "Open Sans",sans-serif;letter-spacing:-.2px;color:#fff}
.cursor{position:absolute;left:623px;top:357px;width:12px;height:18px}
.share{width:1383px;height:779px;display:flex;flex-direction:column;background:#fff;overflow:hidden;filter:blur(.35px)}
.s-task{height:22px;flex:none;display:flex;align-items:center;padding-left:0;background:linear-gradient(90deg,#200704 0,#3b0e09 25%,#6d2510 45%,#592010 72%,#5a2914 85%,#2c0b07 100%);color:#fff}
.st-i{width:26.300px;height:22px;display:flex;align-items:center;justify-content:center}
.st-u{border-top:1px solid #e08a80}
.st-on{background:#8a2d1c;border-top:1px solid #e08a80}
.st-tray{margin-left:auto;display:flex;align-items:center;gap:7px;padding-right:15px;font:10px "Liberation Sans",sans-serif;color:#eee}
.tr-cloud{color:#1e88d8}
.s-titlebar{height:23px;flex:none;background:#6b1c10;display:flex;align-items:center;color:#eee;font:10.500px "Open Sans",sans-serif;padding-left:609px}
.s-titlebar span{margin-left:5px;letter-spacing:-.3px}
.s-wc{margin-left:auto;display:flex;align-items:center;gap:23px;padding-right:11px;color:#ddd}
.s-min{width:8px;height:1px;background:#ddd}
.s-addr{height:28px;flex:none;background:#3b3b3b;border-bottom:2px solid #555;display:flex;align-items:center;color:#ccc;font:11.500px "Liberation Sans",sans-serif}
.sa-c{width:32px;display:flex;justify-content:center}
.sa-dim{color:#666}
.sa-omni{width:1100px;height:21px;margin-left:8px;background:#2f2f2f;border-radius:3px;display:flex;align-items:center;padding:0 8px 0 11px;gap:9px;color:#ccc;flex:none}
.sa-url{flex:1;min-width:0;white-space:nowrap;overflow:hidden;color:#9a9a9a;font-size:10px}
.sa-url b{font-weight:400;color:#eee}
.sa-re{margin-left:13px}
.sa-sep{width:1px;height:16px;background:#555;margin:0 12px}
.sa-col{margin-left:15px}
.sa-av{width:16px;height:18px;border-radius:50%;background:#bbb;margin:0 13px 0 13px}
.s-body{flex:1;display:flex;min-height:0}
.s-tabs{width:35px;flex:none;background:#3a3a3a;display:flex;flex-direction:column;align-items:center;color:#eee;padding-top:5px}
.stb{width:35px;height:25.600px;display:flex;align-items:center;justify-content:center}
.stb-on{background:#555;width:21px;height:23px;border-radius:3px;margin:1px 0 2px}
.stb-add{margin-top:6px;border-top:1px solid #666;height:30px;width:22px}
.s-jira{flex:1;min-width:0;display:flex;flex-direction:column;background:#fff}
.s-zoom{zoom:.72}
.s-main{flex:1;display:flex;min-height:0}
.side{width:173px;flex:none;background:#fafbff;border-right:1px solid #ebecf0;display:flex;flex-direction:column;font-size:10px;letter-spacing:-.2px;color:#5e6c84}
.side-head{display:flex;gap:11px;padding:27px 0 0 12px;height:64px;align-items:flex-start}
.side-logo{width:18px;height:18px}
.sh-t{font-size:10px;font-weight:600;line-height:14px;margin-top:-3px;color:#344563;white-space:nowrap;letter-spacing:-.1px}
.sh-s{font-size:8.300px;line-height:14px;color:#6b778c;white-space:nowrap;letter-spacing:0}
.side-nav{padding:0 6px}
.side-nav li{height:29px;display:flex;align-items:center;padding-left:30px;position:relative;border-radius:3px;white-space:nowrap}
.sn-i{position:absolute;left:2px;width:14px;height:15px;color:#344563}
.sn-on{background:#ebecf0;color:#0052cc}
.sn-on .sn-i{color:#0052cc}
.side-foot{margin-top:auto;text-align:center;font-size:8.200px;color:#6b778c;padding-bottom:16px;letter-spacing:0}
.side-foot p{line-height:19px}
.side-foot p:first-child{white-space:nowrap}

/* jira */
.jira{flex:1;min-height:0;display:flex;flex-direction:column;background:#fff;overflow:hidden}
.jhead{height:56px;flex:none;display:flex;align-items:center;background:#fff;border-bottom:1px solid #ebecf0;box-shadow:0 1px 2px rgba(9,30,66,.1);padding-left:22px;padding-right:25px;position:relative}
.j-grid{width:16px;height:16px;color:#42526e}
.j-logo{width:18px;height:18px;margin-left:13px}
.j-brand{width:141px;margin-left:6px;font:500 19px "Open Sans",sans-serif;color:#253858;letter-spacing:-.5px;white-space:nowrap}
.j-nav{display:grid;grid-template-columns:96px 83px 70px 107px 75px 71px;height:100%;align-items:center}
.ni{display:flex;align-items:center;gap:3px;font:500 14px "Open Sans",sans-serif;letter-spacing:-.25px;color:#42526e;height:100%;white-space:nowrap}
.ni-on{color:#0052cc;border-bottom:3px solid #0052cc;border-top:3px solid transparent;margin-left:-2px;padding:0 2px;width:66px}
.chv{width:12px;height:12px;color:#a5adba}
.ni-on .chv{color:#4c9aff}
.j-create{width:65px;height:32px;background:#0052cc;color:#fff;border-radius:3px;font:600 14px "Open Sans",sans-serif;letter-spacing:-.2px}
.j-search{margin-left:auto;width:199px;height:31px;border:2px solid #dfe1e6;border-radius:4px;display:flex;align-items:center;gap:10px;padding-left:8px;color:#5e6c84;font:14px "Open Sans",sans-serif}
.j-hic{width:22px;height:22px;color:#344563;margin-left:18px}
.j-search+.j-hic{margin-left:12px}
.av{display:flex;align-items:center;justify-content:center;border-radius:50%;flex:none;font-weight:600}
.av-zj{background:#00a3bf;color:#0b5a6e}
.av-lr{background:#5243aa;color:#e7e4f7}
.av-add{background:#dfe1e6;color:#6b778c}
.av-head{width:25px;height:30px;font-size:12px;margin-left:18px}
.av-32{width:32px;height:32px;font-size:14px}
.av-24{width:24px;height:24px;font-size:11px}
.j-main{flex:1;min-height:0;display:flex;position:relative}
.rail{width:22px;flex:none;border-right:1px solid #ebecf0;display:flex;padding-top:32px}
.rail-btn{width:24px;height:24px;margin-left:8px;flex:none;border-radius:50%;background:#fff;box-shadow:0 0 1px rgba(9,30,66,.4),0 1px 2px rgba(9,30,66,.2);display:flex;align-items:center;justify-content:center;color:#6b778c;z-index:1}
.jcol{flex:1;min-width:0;padding-left:30px;display:flex;flex-direction:column}
.crumb{margin-top:26px;height:20px;font:14px/20px "Open Sans",sans-serif;letter-spacing:-.25px;color:#6b778c}
.j-h1{margin-top:3px;height:32px;font:500 25px/32px "Open Sans",sans-serif;letter-spacing:-.7px;color:#172b4d}
.filters{margin-top:15px;height:40px;display:flex;align-items:center;flex:none}
.f-search{width:120px;height:40px;border:2px solid #dfe1e6;border-radius:3px;display:flex;align-items:center;justify-content:flex-end;padding-right:10px;color:#6b778c;background:#fafbfc}
.av-32:nth-child(2){margin-left:16px}
.av-add{margin-left:10px}
.f-epic{margin-left:24px;display:flex;align-items:center;font:14px "Open Sans",sans-serif;letter-spacing:-.3px;color:#42526e}
.f-badge{width:18px;height:22px;border-radius:50%;background:#0052cc;color:#fff;font-size:12px;font-weight:400;display:flex;align-items:center;justify-content:center;margin-left:4px}
.chv2{width:12px;height:12px;margin-left:10px;color:#42526e}
.f-clear{margin-left:39px;font:14px "Open Sans",sans-serif;letter-spacing:-.25px;color:#42526e}
.board{margin-top:24px;flex:1;min-height:0;display:flex;align-items:flex-start;gap:8px}
.epic{width:270px;height:393px;flex:none;background:#f4f5f7;border-radius:5px;display:flex;flex-direction:column}
.ep-head{height:42px;flex:none;display:flex;align-items:center;justify-content:space-between;padding:0 13px 0 16px;font:14px "Open Sans",sans-serif;color:#42526e;letter-spacing:-.2px}
.ep-body{flex:1;min-height:0;display:flex;padding-left:4px}
.ep-col{width:245px;flex:none;display:flex;flex-direction:column;padding-bottom:6px}
.ep-list{flex:1;min-height:0;overflow:hidden;display:flex;flex-direction:column;gap:4px}
.ep-card{flex:none;background:#fff;border-radius:3px;box-shadow:0 1px 1px rgba(9,30,66,.25);padding:0 14px;font:14px "Open Sans",sans-serif;letter-spacing:-.3px;color:#5e6c84}
.ep-none{height:42px;display:flex;align-items:center;padding-left:12px}
.ep-t{height:38px;padding-top:6px;display:flex;align-items:center;margin-left:-4px}
.ep-t svg{margin-right:4px;color:#5e6c84}
.sq{width:16px;height:16px;border-radius:2px;margin-right:8px;flex:none}
.sq-g{background:#ff7452}.sq-c{background:#8777d9}.sq-m{background:#57d9a3}.sq-b{background:#de350b}.sq-d{background:#ff991f}
.ep-bar{height:4px;border-radius:2px;background:#ebecf0;margin-bottom:12px}
.ep-on{background:#344563;color:#fff}
.ep-on .ep-t{font-weight:600;color:#dfe1e6}
.ep-on .ep-t svg{color:#fff}
.ep-on .ep-bar{background:#fff}
.ep-soft{background:#f8f9fb}
.ep-l{font-size:12px;line-height:16px;margin:18px 0 0 -2px;color:#5e6c84}
.ep-bar+.ep-l{margin-top:21px}
.ep-v{font-size:14px;line-height:18px;margin:1px 0 0 -2px;color:#6b778c}
.ep-view{height:32px;margin:10px 6px 18px -2px;border-radius:3px;background:#f4f5f7;display:flex;align-items:center;justify-content:center;font-weight:600;color:#42526e}
.ep-soft .ep-view{background:#ebecf0}
.ep-create{height:36px;flex:none;margin-top:4px;border-radius:3px;background:#ebecf0;display:flex;align-items:center;justify-content:center;gap:5px;font:14px "Open Sans",sans-serif;letter-spacing:-.3px;color:#42526e}
.vs{width:13px;flex:none;background:#f1f1f1;display:flex;flex-direction:column;align-items:center}
.vs-up,.vs-dn{width:0;height:0;border-left:4px solid transparent;border-right:4px solid transparent;margin:6px 0 5px;flex:none}
.vs-up{border-bottom:4px solid #a3a3a3}
.vs-dn{border-top:5px solid #505050;margin-top:auto;margin-bottom:6px}
.vs-th{display:block;width:100%;background:#c1c1c1;flex:none;height:254px}
.vs-e{margin:0 0 6px 6px;height:345px}
.vs-page{width:17px;margin:-8px 0 0 auto;height:417px}
.vs-page .vs-th{height:294px;width:14px}
.bl{width:981px;flex:none}
.sp{background:#f4f5f7;border-radius:5px;padding:8px 8px 8px 12px}
.bk{padding:0 8px 0 12px}
.sp-head{height:32px;display:flex;align-items:center;padding-left:8px;font:14px "Open Sans",sans-serif;letter-spacing:-.3px;color:#42526e}
.sp-head b{margin-left:6px;font-weight:600;color:#253858}
.sp-dates{display:flex;align-items:center;gap:4px;margin-left:13px;font-size:13.500px}
.sp-count{margin-left:19px;color:#6b778c}
.sp-head b+.sp-count{margin-left:6px}
.cnts{margin-left:auto;display:flex;gap:3px;font-size:13px}
.cnts i{width:20px;height:21px;border-radius:50%;display:flex;align-items:center;justify-content:center}
.c0{background:#dfe1e6;color:#42526e}
.c1{background:#0052cc;color:#fff}
.c2{background:#00875a;color:#fff}
.b-start{width:95px;height:32px;margin-left:7px;background:#0052cc;color:#fff;border-radius:3px;font:600 14px "Open Sans",sans-serif;letter-spacing:-.4px}
.b-more{width:32px;height:32px;margin-left:8px;background:#ebecf0;border-radius:3px;color:#42526e;display:flex;align-items:center;justify-content:center}
.i-dots{width:18px;height:6px}
.b-create{width:105px;height:32px;margin-left:8px;background:#f4f5f7;border-radius:3px;color:#42526e;font:14px "Open Sans",sans-serif;letter-spacing:-.3px}
.rows{margin-top:8px;display:flex;flex-direction:column;border:1px solid #ebecf0;border-bottom:0;background:#fff}
.bk .rows{margin-top:7px}
.row{height:40px;flex:none;display:flex;align-items:center;border-bottom:1px solid #ebecf0;padding:0 53px 0 16px;background:#fff;font:14px "Open Sans",sans-serif}
.row-sel{background:#deebff}
.r-ic{width:14px;height:14px}
.r-key{margin-left:9px;color:#5e6c84;letter-spacing:-.3px;white-space:nowrap}
.r-sum{margin-left:9px;flex:1;min-width:0;white-space:nowrap;overflow:hidden;color:#344563;letter-spacing:-.38px}
.tag{width:102px;height:21px;margin-left:10px;background:#ffebe6;border-radius:3px;color:#bf2600;font:600 12px "Open Sans",sans-serif;letter-spacing:-.25px;display:flex;align-items:center;justify-content:center;white-space:nowrap;flex:none}
.tag-c{background:#eae6ff;color:#403294}
.row-sel .tag-c{background:#e6e5fb}
.todo{width:55px;height:17px;margin-left:10px;background:#dfe1e6;border-radius:3px;color:#42526e;font:600 11.500px "Open Sans",sans-serif;letter-spacing:-.3px;display:flex;align-items:center;justify-content:center;gap:2px;white-space:nowrap;flex:none}
.r-av{width:24px;height:24px;margin-left:11px}
.mk{height:40px;display:flex;align-items:center;gap:3px;padding-left:13px;font:14px "Open Sans",sans-serif;letter-spacing:-.3px;color:#42526e}
.drag{height:56px;padding-bottom:8px;display:flex;align-items:center;justify-content:center}
.drag-i{width:16px;height:24px}
.quick{position:absolute;right:44px;bottom:24px;width:148px;height:44px;border-radius:22px;background:#6554c0;color:#fff;font:600 15px "Open Sans",sans-serif;letter-spacing:-.3px;display:flex;align-items:center;justify-content:center;gap:10px;box-shadow:0 4px 8px rgba(9,30,66,.25)}
.i-bulb{width:14px;height:18px;color:#fff}

/* left-hand overrides */
.s-col{width:1176px;flex:none;flex-grow:0;overflow:hidden}
.s-col .crumb{margin-top:27px}
.s-col .board{margin-top:15px}
.s-epic{height:755px}
.s-epic .ep-head{height:51px}
.s-epic .ep-col{padding-bottom:5px}
.vs-s{margin:0 0 0 6px;height:704px}
.vs-s .vs-th{height:447px}
.s-bl{width:833px;margin-top:10px}
.s-bl .row{height:42px}
.s-bl .mk{height:38px}
.s-bl .bk .rows{margin-top:4px}
.dwrap{margin-top:110px;display:flex;height:596px;flex:none;width:328px}
.vs-d{width:12px}
.vs-fill{flex:1}
.vs-r{width:10px}
.vs-r .vs-th{height:411px;width:10px}
.vs-r .vs-up{margin:5px 0 4px}
.detail{width:306px;padding-left:22px;padding-right:16px;display:flex;flex-direction:column;background:#fff;font-family:"Open Sans",sans-serif}
.d-scroll{height:486px;overflow:hidden;flex:none;border-bottom:1px solid #ebecf0}
.d-top{display:flex;height:30px;margin-top:1px;justify-content:space-between}
.d-crumb{font-size:8.200px;color:#6b778c;line-height:15px;white-space:nowrap}
.d-crumb p{display:flex;align-items:center;gap:4px}
.d-act{display:flex;align-items:flex-start;gap:12px;color:#42526e;padding-top:7px;margin-right:-6px}
.d-eye{display:flex;align-items:center;gap:4px;font-size:9px;line-height:12px;color:#6b778c}
.i-d14{width:14px;height:5px;margin-top:3px}
.d-title{margin-top:11px;font-size:17px;line-height:20px;font-weight:600;letter-spacing:-.25px;color:#172b4d;width:262px}
.d-btns{margin-top:8px;display:flex;gap:7px}
.d-b{width:22px;height:23px;background:#f4f5f7;border-radius:3px;display:flex;align-items:center;justify-content:center;color:#42526e}
.d-status{margin-top:15px;width:63px;height:23px;background:#dfe1e6;border-radius:3px;display:flex;align-items:center;justify-content:center;gap:7px;font-size:10px;font-weight:600;color:#42526e}
.d-lab{margin-top:18px;font-size:8.800px;line-height:16px;font-weight:600;color:#42526e}
.d-desc{margin-top:3px;font-size:9.400px;line-height:16.500px;color:#42526e;width:245px}
.pinned{margin:12px 0 0 -9px;width:286px;height:57px;background:#eae6ff;border-radius:2px;padding:7px 10px 0 9px;color:#403294}
.pin-t{display:flex;justify-content:space-between;align-items:center;font-size:7.800px;line-height:16px}
.pin-b{margin-top:8px;display:flex;align-items:center;gap:4px;font-size:9.400px;white-space:pre;line-height:16px;color:#5243aa}
.f-row{display:grid;grid-template-columns:90px 1fr;height:35px;color:#172b4d}
.pinned+.f-row{margin-top:3.500px}
.f-l{padding-top:11px;line-height:12px;width:60px;font-size:8px;font-weight:600;color:#344563}
.f-v{padding-top:9px;font-size:9px;line-height:16px;color:#6b778c}
.f-ua{display:flex;align-items:flex-start;gap:7px;padding-top:8px}
.f-ua svg{margin-top:-1px}
.f-link{color:#0052cc}
.d-foot{padding-top:12px}
.d-cm{display:flex;align-items:center;gap:10px}
.d-input{width:234px;height:28px;border:1px solid #dfe1e6;border-radius:3px;padding-left:15px;display:flex;align-items:center;font-size:10px;color:#6b778c}
.d-tip{margin:6px 0 0 33px;font-size:8.800px;line-height:12px;color:#6b778c}
.d-tip kbd{background:#dfe1e6;padding:1px 3px;font-family:inherit;font-weight:700;border-radius:2px}

/* participants */
.strip{height:121px;flex:none;display:flex;justify-content:flex-end;padding-top:3px;background:#1c1c1c}
.tile{width:225px;display:flex;flex-direction:column;padding:32px 0 0 19px;color:#fff;font:15px "Open Sans",sans-serif;letter-spacing:-.3px}
.tile-a{background:#3a3a3a}
.tile-z{background:#202020;width:226px}
.tile-p{background:#3f3f5c}
.tile-pl{background:radial-gradient(ellipse 150px 90px at 60% 30%,#4a4a70,#373750)}
.tile-pr{background:radial-gradient(ellipse 150px 90px at 50% 30%,#45456a,#343448)}
.pa{width:55px;height:55px;border-radius:50%;display:flex;align-items:center;justify-content:center;align-self:center;margin-left:-19px;font:24px "Open Sans",sans-serif;letter-spacing:0;flex:none}
.pa-ring{box-shadow:0 0 0 7px #33334c,0 0 0 11px #9c9cff}
.pa-nd{background:#e6dcd8;color:#5c3a2e}
.pa-ps{background:#dad6e9;color:#2c2660}
.pa-lr{background:#cddaea;color:#1c3a6b}
.pa-u{background:#f6e7c9;color:#7a5a1a}
.pa-zj{background:#c5d3e6;color:#1c3a6b}
.nm{margin-top:6px;height:20px;line-height:20px;display:flex;align-items:center;gap:8px;white-space:nowrap;text-shadow:0 1px 2px rgba(0,0,0,.6)}

/* taskbars */
.tb{display:flex;align-items:stretch;flex:none}
.tb-l{height:50px;background:linear-gradient(90deg,#efdce4 0,#ebd5dc 45%,#efdbd3 60%,#ecd6d2 78%,#cbe8ea 79.500%,#cbe8ea 100%);color:#000}
.tb-r{height:40px;background:linear-gradient(90deg,#efdce4 0,#ebd5dc 25%,#efdbd3 55%,#ead8d6 76%,#cbe8ea 78.500%,#cbe8ea 100%);color:#000}
.tb-sys{width:48px;display:flex;align-items:center;justify-content:center}
.tb-sys-l{width:60px}
.tb-last{margin-right:2px}
.tb-search{width:430px;background:#fff;border:1px solid #ccc;display:flex;align-items:center;padding-left:7px;gap:12px;font:500 18.500px "Open Sans",sans-serif;letter-spacing:-.7px;color:#1a1a1a}
.tb-a{width:49px;display:flex;align-items:center;justify-content:center}
.tb-l .tb-a{width:62px}
.tb-sys-l+.tb-a{margin-left:2px}
.on{background:linear-gradient(#0078d4,#0078d4) center bottom/82% 3px no-repeat}
.tb-act{background:linear-gradient(#0078d4,#0078d4) center bottom/100% 3px no-repeat,#f7efed}
.tb-tray{margin-left:auto;display:flex;align-items:center;padding-right:28px;color:#111}
.tb-tray>svg:nth-child(1){margin-right:14px}
.tb-tray>svg:nth-child(2){margin-right:12px;transform:rotate(180deg)}
.tb-tray>svg:nth-child(3){margin-right:8px}
.clock{display:flex;flex-direction:column;align-items:center;justify-content:center;gap:2px;font:15px/20px "Open Sans",sans-serif;letter-spacing:-.5px;color:#111;margin:0 21px 0 15px}
.clock-r{margin:0 7px 0 auto;font-size:13.500px;line-height:19px;gap:0}

/* chrome */
.chrome{width:1360px;height:768px;display:flex;flex-direction:column;flex:none;background:#353535;color:#fff}
.c-tabs{height:34px;flex:none;background:#000;display:flex;align-items:stretch;padding-left:8px;font:12.500px "Open Sans",sans-serif;letter-spacing:-.35px}
.tab{width:239px;flex:none;display:flex;align-items:center;padding:0 10px 0 11px;color:#eee}
.tab-on{background:#353535;border-radius:8px 8px 0 0}
.tab-sep{border-right:1px solid #444}
.tab-t{margin-left:7px;flex:1;min-width:0;white-space:nowrap;overflow:hidden;mask-image:linear-gradient(90deg,#000 85%,transparent);-webkit-mask-image:linear-gradient(90deg,#000 85%,transparent)}
.tab:first-child .tab-t,.tab:nth-child(3) .tab-t{mask-image:none;-webkit-mask-image:none}
.c-plus{width:16px;height:16px;align-self:center;margin-left:15px}
.c-wc{margin-left:auto;display:flex;align-items:center;padding-right:16px;color:#eee}
.c-circ{width:14px;height:14px;border-radius:50%;background:#fff;margin-right:31px}
.c-min{width:12px;height:1px;background:#eee;margin-right:33px}
.c-x{margin-left:32px}
.c-tool{height:36px;flex:none;background:#353535;display:flex;align-items:center;padding-left:6px;color:#ddd}
.ct-c{width:32px;display:flex;justify-content:center;flex:none}
.ct-dim{color:#777}
.omni{width:994px;height:28px;margin:0 1px 0 6px;border-radius:14px;background:#202124;display:flex;align-items:center;padding:0 8px 0 13px;gap:10px;flex:none}
.i-lock{width:12px;height:14px;color:#eee}
.url{flex:1;min-width:0;white-space:nowrap;overflow:hidden;font:14.500px "Liberation Sans",sans-serif;color:#9aa0a6;letter-spacing:-.18px}
.url b{font-weight:400;color:#eee}
.paused{width:80px;height:28px;margin-left:3px;border:1px solid #8ab4f8;border-radius:14px;display:flex;align-items:center;gap:8px;padding-left:2px;font:13px "Open Sans",sans-serif;color:#8ab4f8;letter-spacing:-.3px}
.p-z{width:22px;height:22px;border-radius:50%;background:#00897b;color:#fff;display:flex;align-items:center;justify-content:center;font-size:11px}
.ct-dots{margin-left:16px;display:flex;flex-direction:column;gap:3px}
.ct-dots i{width:3px;height:3px;border-radius:50%;background:#ddd}
.c-marks{height:33px;flex:none;background:#353535;border-bottom:1px solid #222;display:flex;align-items:center;padding-left:15px;gap:17px;font:13px "Open Sans",sans-serif;letter-spacing:-.4px;color:#eee}
.bm{display:flex;align-items:center;gap:9px;white-space:nowrap}
.i-apps{width:14px;height:18px}
.i-bf{width:14px;height:18px}
.bm-r{margin-left:auto;padding-left:12px;border-left:1px solid #666;height:20px;margin-right:14px}
```
